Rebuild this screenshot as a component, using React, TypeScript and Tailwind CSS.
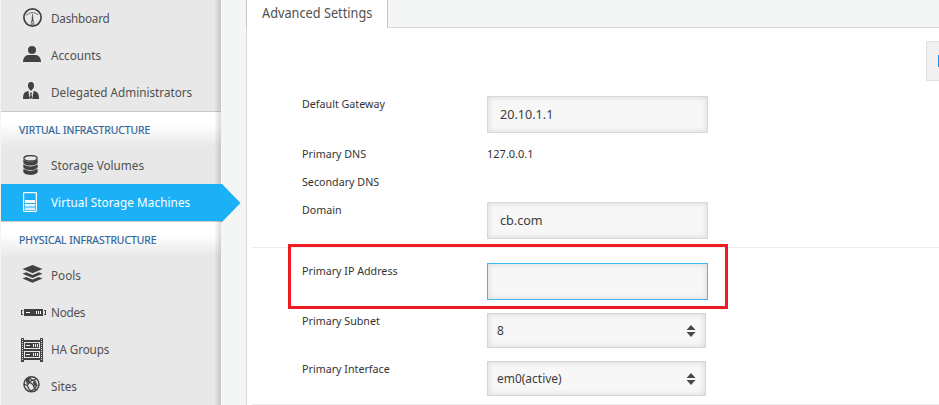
import type { ReactNode } from 'react';

const ink = '#414141';

function GaugeIcon() {
  return (
    <svg width="20" height="20" viewBox="0 0 20 20" fill="none" stroke={ink}>
      <circle cx="9.5" cy="9.5" r="8.6" strokeWidth="1.7" />
      <path d="M3.400 7.200Q9.500 2.200 15.600 7.200" strokeWidth="1" strokeDasharray="2 .7" />
      <path d="M9.500 6.200l.7 7.400H8.800z" fill={ink} strokeWidth=".5" />
      <circle cx="9.500" cy="14.300" r="1.200" fill="#e8e8e8" strokeWidth=".8" />
      <path d="M7 16.300h5" strokeWidth=".6" />
    </svg>
  );
}

function UserIcon() {
  return (
    <svg width="18" height="16" viewBox="0 0 18 16" fill={ink}>
      <circle cx="9" cy="4" r="4" />
      <path d="M0 16C0 12.200 2.400 9 5.400 9h7.200c3 0 5.400 3.200 5.400 7z" />
    </svg>
  );
}

function AdminIcon() {
  return (
    <svg width="16" height="17" viewBox="0 0 16 17" fill={ink}>
      <path d="M8 0C5.800 0 5 1.300 5 3.200c0 2 .8 3.600 1.700 4.300L8 9l1.300-1.500C10.200 6.800 11 5.200 11 3.200 11 1.300 10.200 0 8 0z" />
      <path d="M5.300 8.700L2 10.200C.6 11 0 13.500 0 17h6.800zM10.700 8.700L14 10.200c1.400.8 2 3.300 2 6.800H9.200z" />
      <path d="M8 10l1 1.200-.5 1.200.7 3.300L8 17l-1.200-1.300.7-3.300-.5-1.200z" />
    </svg>
  );
}

function DatabaseIcon() {
  return (
    <svg width="15" height="20" viewBox="0 0 15 20" fill={ink}>
      <path d="M.3 13.800Q7.500 18 14.700 13.800v3C14 20.900 1 20.900.3 16.800z" />
      <path d="M.3 9.200Q7.500 13.600 14.700 9.200v2.900C14 16.200 1 16.200.3 12.100z" />
      <path d="M.3 4.600Q7.500 9 14.700 4.600v2.900C14 11.600 1 11.600.3 7.500z" />
      <ellipse cx="7.500" cy="3.300" rx="6.600" ry="2.700" fill="#e8e8e8" stroke={ink} strokeWidth="1.300" />
    </svg>
  );
}

function MachineIcon() {
  return (
    <svg width="14" height="20" viewBox="0 0 14 20" fill="none">
      <rect x=".6" y=".6" width="12.800" height="18.800" rx=".8" stroke="#fff" strokeWidth="1.200" />
      <path d="M2 8h10v3H2z" fill="#fff" />
      <path d="M2 12h10v2.500H2z" fill="#e5f6fe" />
      <path d="M2 15.500h10v2.500H2z" fill="#d4f0fe" />
    </svg>
  );
}

function LayersIcon() {
  return (
    <svg width="21" height="18" viewBox="0 0 21 18" fill={ink}>
      <path d="M10.500 0L20.500 4.100 10.500 8.200.5 4.100z" />
      <path d="M.5 8.700l3.600-1.500 6.400 2.700 6.400-2.700 3.600 1.500-10 4.200z" />
      <path d="M.5 13.400l3.600-1.500 6.400 2.700 6.400-2.700 3.600 1.500-10 4.300z" />
    </svg>
  );
}

function NodeIcon() {
  return (
    <svg width="25" height="7" viewBox="0 0 25 7" shapeRendering="crispEdges">
      <path d="M3 0h19v7H3zM0 1h2v1H1v3h1v1H0zM25 1h-2v1h1v3h-1v1h2z" fill={ink} />
      <path d="M5 3h4v1H5zM15 2h1v3h-1zM17 2h1v3h-1zM19 2h1v3h-1z" fill="#fff" />
    </svg>
  );
}

function RackIcon() {
  return (
    <svg width="22" height="24" viewBox="0 0 22 24" shapeRendering="crispEdges">
      <path d="M0 0h3v24H0zM19 0h3v24h-3zM3 2h16v2H3zM3 11h16v2H3zM3 20h16v2H3zM4 5h14v5H4zM4 14h14v5H4z" fill={ink} />
      <path d="M1 1h1v1H1zM1 3h1v1H1zM1 5h1v1H1zM1 7h1v1H1zM1 9h1v1H1zM1 11h1v1H1zM1 13h1v1H1zM1 15h1v1H1zM1 17h1v1H1zM1 19h1v1H1zM1 21h1v1H1zM20 1h1v1h-1zM20 3h1v1h-1zM20 5h1v1h-1zM20 7h1v1h-1zM20 9h1v1h-1zM20 11h1v1h-1zM20 13h1v1h-1zM20 15h1v1h-1zM20 17h1v1h-1zM20 19h1v1h-1zM20 21h1v1h-1z" fill="#e8e8e8" />
      <path d="M5 7h4v1H5zM12 6h1v3h-1zM14 6h1v3h-1zM16 6h1v3h-1zM5 16h4v1H5zM12 15h1v3h-1zM14 15h1v3h-1zM16 15h1v3h-1z" fill="#eee" />
    </svg>
  );
}

function GlobeIcon() {
  return (
    <svg width="17" height="17" viewBox="0 0 17 17" fill="none" stroke={ink}>
      <circle cx="8.500" cy="8.300" r="7.500" strokeWidth="1.500" />
      <path d="M3 3.600L7 2l2 2.200-2.400 2L4.300 9.500l1.500 3.200 2 2.500M9 4.200l3 1 2 4-2.300 3.500M9 4.200l4-.7M6.600 6.200l3.200 2.300 1.900 4.200-3.900 2.300M1 8l3.300 1.500M11.700 12.700l1.800 1" strokeWidth="1.200" />
      <path d="M3 4l4-1.500-.5 3.300L3.700 8.500zM10 5.500l2 .3 1 3-1 2.200-1.700-3z" fill={ink} stroke="none" />
    </svg>
  );
}

type ItemProps = { icon: ReactNode; label: string; tracking?: string; active?: boolean; inset?: string; lift?: string };

function NavItem({ icon, label, tracking = 'tracking-normal', active, inset = 'pl-[22px]', lift = 'pb-0' }: ItemProps) {
  return (
    <a className={`relative flex h-[37px] shrink-0 items-center text-[13px] ${active ? 'z-10 bg-[#1cb0f6] text-white' : 'text-[#505050]'}`}>
      <span className={`flex w-[50px] shrink-0 ${inset} ${lift}`}>{icon}</span>
      <span className={`origin-left scale-x-90 whitespace-nowrap ${tracking}`}>{label}</span>
      {active && (
        <svg className="absolute top-0 left-[220px]" width="20" height="38" viewBox="0 0 20 38">
          <path d="M0 0h1l18.500 19L1 38H0z" fill="#1cb0f6" />
        </svg>
      )}
    </a>
  );
}

function NavHeading({ children }: { children: string }) {
  return (
    <h2 className="flex h-9 shrink-0 items-center whitespace-nowrap border-t border-[#c9c9c9] bg-linear-to-b from-white from-35% to-[#e8e8e8] pl-[18px] pt-px text-[11px] text-[#2f659b] [-webkit-text-stroke:0.2px_#2f659b]">
      <span className="origin-left scale-x-94">{children}</span>
    </h2>
  );
}

function Sidebar() {
  return (
    <nav className="relative flex w-[221px] shrink-0 flex-col border-l border-[#f4f4f4] bg-[#e8e8e8]">
      <NavItem icon={<GaugeIcon />} label="Dashboard" tracking="tracking-[-0.25px]" lift="pb-px" />
      <NavItem icon={<UserIcon />} label="Accounts" lift="pb-1" />
      <NavItem icon={<AdminIcon />} label="Delegated Administrators" lift="pb-1" />
      <NavHeading>VIRTUAL INFRASTRUCTURE</NavHeading>
      <NavItem icon={<DatabaseIcon />} label="Storage Volumes" lift="pb-px" />
      <NavItem icon={<MachineIcon />} label="Virtual Storage Machines" tracking="tracking-[0.1px]" lift="pb-px" active />
      <NavHeading>PHYSICAL INFRASTRUCTURE</NavHeading>
      <NavItem icon={<LayersIcon />} label="Pools" inset="pl-[21px]" lift="pb-1" />
      <NavItem icon={<NodeIcon />} label="Nodes" tracking="tracking-[-0.25px]" inset="pl-5" />
      <NavItem icon={<RackIcon />} label="HA Groups" tracking="tracking-[-0.15px]" inset="pl-5" />
      <NavItem icon={<GlobeIcon />} label="Sites" lift="pb-1" />
      <div className="pointer-events-none absolute inset-y-0 right-0 w-[7px] bg-linear-to-r from-transparent to-black/15" />
    </nav>
  );
}

function Row({ label, height, children }: { label: string; height: string; children?: ReactNode }) {
  return (
    <div className={`flex shrink-0 items-start ${height}`}>
      <label className="w-[185px] shrink-0 whitespace-nowrap text-[11.5px] leading-4 text-[#333]">
        <span className="inline-block origin-left scale-x-93">{label}</span>
      </label>
      {children}
    </div>
  );
}

const fieldBase = 'flex items-center shadow-[inset_0_0_6px_rgba(0,0,0,0.13)] bg-[#f7f7f7] pt-px text-[13px] text-[#3c3c3c]';

function TextField({ value, focused }: { value?: string; focused?: boolean }) {
  return (
    <div className={`${fieldBase} h-[37px] w-[221px] border pl-3 ${focused ? 'border-[#36bbf5]' : 'border-[#d8d8d8]'}`}>
      <span className="origin-left scale-x-97">{value}</span>
    </div>
  );
}

function SelectField({ value }: { value: string }) {
  return (
    <div className={`${fieldBase} h-[35px] w-[219px] justify-between border border-[#d8d5d5] pl-[9px] pr-[9px]`}>
      <span className="origin-left scale-x-92">{value}</span>
      <svg width="10" height="12" viewBox="0 0 10 12" fill="#484848">
        <path d="M5 0l4.500 5h-9zM5 12L.5 7h9z" />
      </svg>
    </div>
  );
}

export default function App() {
  return (
    <div className="flex h-[405px] w-[939px] overflow-hidden bg-[#f4f6f6] font-['Noto_Sans','Open_Sans',sans-serif]">
      <Sidebar />
      <main className="ml-[25px] flex flex-1 flex-col">
        <div className="flex h-7 shrink-0">
          <div className="w-[142px] border-x border-[#c8c8c8] bg-white pl-[15px] pt-[3px] text-[14px] leading-5 whitespace-nowrap text-[#505050]">
            <span className="inline-block origin-left scale-x-91">Advanced Settings</span>
          </div>
          <div className="flex-1 border-b border-[#dadada]" />
        </div>
        <section className="relative flex flex-1 flex-col border-l border-[#dadada] bg-white">
          <div className="flex h-[68px] shrink-0 justify-end pt-[13px]">
            <div className="flex h-10 w-[13px] items-center justify-end border border-r-0 border-[#e2e2e2] bg-[#f0f0f0] pb-px">
              <div className="h-3 w-px bg-[#0d96f2]" />
            </div>
          </div>
          <div className="ml-[5px] flex h-[152px] shrink-0 flex-col border-b border-[#eeeeee] pl-[50px]">
            <Row label="Default Gateway" height="h-[50px]"><TextField value="20.10.1.1" /></Row>
            <Row label="Primary DNS" height="h-7">
              <span className="text-[11px] leading-4 text-[#333]">127.0.0.1</span>
            </Row>
            <Row label="Secondary DNS" height="h-7" />
            <Row label="Domain" height="h-[37px]"><TextField value="cb.com" /></Row>
          </div>
          <div className="ml-[5px] flex h-[157px] shrink-0 flex-col border-b border-[#eeeeee] pl-[50px] pt-[15px]">
            <Row label="Primary IP Address" height="h-[50px]"><TextField focused /></Row>
            <Row label="Primary Subnet" height="h-12"><SelectField value="8" /></Row>
            <Row label="Primary Interface" height="h-9"><SelectField value="em0(active)" /></Row>
          </div>
          <div className="pointer-events-none absolute top-[216px] left-[41px] h-[65px] w-[440px] border-[3px] border-[#ed1c24]" />
        </section>
      </main>
    </div>
  );
}
